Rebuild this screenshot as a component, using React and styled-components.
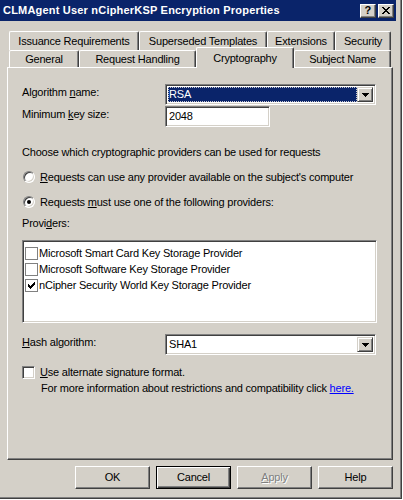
import React from 'react'
import styled, { createGlobalStyle } from 'styled-components'

const face = '#d4d0c8'
const shadow = '#808080'
const dark = '#404040'
const navy = '#0a246a'

const GlobalStyle = createGlobalStyle`
  html, body {
    margin: 0;
    padding: 0;
    background: #ffffff;
  }
  body {
    font-family: "Liberation Sans", Arial, sans-serif;
    font-size: 11px;
    line-height: 13px;
    letter-spacing: -0.2px;
    color: #000;
  }
`

const Window = styled.div`
  width: 402px;
  height: 499px;
  box-sizing: border-box;
  background: ${face};
  border-right: 1px solid ${dark};
  border-bottom: 1px solid ${dark};
  box-shadow: inset -1px -1px ${shadow};
  padding-right: 3px;
  display: flex;
  flex-direction: column;
`

const TitleBar = styled.div`
  height: 21px;
  margin-right: 2px;
  background: ${navy};
  display: flex;
  align-items: center;
  padding: 0 2px 0 3px;
  color: #fff;
  font-weight: bold;
  font-size: 11px;
  letter-spacing: 0.2px;
`

const Title = styled.div`
  flex: 1;
  white-space: nowrap;
`

const CaptionButton = styled.div`
  width: 16px;
  height: 14px;
  box-sizing: border-box;
  background: ${face};
  border-top: 1px solid #fff;
  border-left: 1px solid #fff;
  border-right: 1px solid ${dark};
  border-bottom: 1px solid ${dark};
  box-shadow: inset -1px -1px ${shadow};
  color: #000;
  display: flex;
  align-items: center;
  justify-content: center;
  margin-left: ${p => p.$gap || 0}px;
  font-size: 11px;
  font-weight: bold;
`

const TabArea = styled.div`
  margin: 10px 0 0 9px;
  display: flex;
  flex-direction: column;
`

const TabRow = styled.div`
  display: flex;
  height: ${p => p.$h}px;
`

const Tab = styled.div`
  width: ${p => p.$w}px;
  height: ${p => (p.$active ? 21 : p.$h)}px;
  margin-top: ${p => (p.$active ? -3 : 0)}px;
  box-sizing: border-box;
  background: ${face};
  border-top: 1px solid #fff;
  border-left: 1px solid #fff;
  border-right: 1px solid ${dark};
  border-radius: 2px 2px 0 0;
  box-shadow: inset -1px 0 ${shadow};
  display: flex;
  align-items: ${p => (p.$active ? 'flex-start' : 'center')};
  padding-top: ${p => (p.$active ? 4 : 0)}px;
  justify-content: center;
  white-space: nowrap;
  position: ${p => (p.$active ? 'relative' : 'static')};
  z-index: ${p => (p.$active ? 1 : 0)};
`

const Panel = styled.div`
  margin-left: 7px;
  width: 386px;
  height: 393px;
  box-sizing: border-box;
  border-top: 1px solid #fff;
  border-left: 1px solid #fff;
  border-right: 1px solid ${dark};
  border-bottom: 1px solid ${dark};
  box-shadow: inset -1px -1px ${shadow};
  padding: 16px 0 0 14px;
  display: flex;
  flex-direction: column;
`

const FieldRow = styled.div`
  display: flex;
  align-items: flex-start;
  margin-top: ${p => p.$mt || 0}px;
`

const FieldLabel = styled.div`
  width: 143px;
  padding-top: 2px;
`

const Sunken = styled.div`
  width: ${p => p.$w}px;
  height: ${p => p.$h || 21}px;
  box-sizing: border-box;
  border-top: 1px solid ${shadow};
  border-left: 1px solid ${shadow};
  border-right: 1px solid #fff;
  border-bottom: 1px solid #fff;
  box-shadow: inset 1px 1px ${dark}, inset -1px -1px ${face};
  background: #fff;
  display: flex;
  padding: 2px;
`

const ComboValue = styled.div`
  flex: 1;
  display: flex;
  align-items: center;
  padding-left: 1px;
  background: ${p => (p.$selected ? navy : '#fff')};
  color: ${p => (p.$selected ? '#fff' : '#000')};
  outline: ${p => (p.$selected ? '1px dotted #c8c8d0' : 'none')};
  outline-offset: -1px;
`

const DropButton = styled.div`
  width: 16px;
  box-sizing: border-box;
  background: ${face};
  border-top: 1px solid ${face};
  border-left: 1px solid ${face};
  border-right: 1px solid ${dark};
  border-bottom: 1px solid ${dark};
  box-shadow: inset 1px 1px #fff, inset -1px -1px ${shadow};
  display: flex;
  align-items: center;
  justify-content: center;
`

const TextValue = styled.div`
  flex: 1;
  display: flex;
  align-items: center;
  padding-left: 1px;
`

const Text = styled.div`
  margin-top: ${p => p.$mt || 0}px;
  margin-left: ${p => p.$ml || 0}px;
  white-space: nowrap;
`

const OptionRow = styled.div`
  display: flex;
  align-items: center;
  height: ${p => p.$h || 16}px;
  margin-top: ${p => p.$mt || 0}px;
  white-space: nowrap;
`

const Radio = styled.span`
  width: 12px;
  height: 12px;
  margin: 0 5px 0 1px;
  box-sizing: border-box;
  border-radius: 50%;
  border: 1px solid;
  border-color: ${shadow} #fff #fff ${shadow};
  box-shadow: inset 1px 1px ${dark}, inset -1px -1px ${face};
  background: #fff;
  display: flex;
  align-items: center;
  justify-content: center;
  &::after {
    content: '';
    width: 4px;
    height: 4px;
    border-radius: 50%;
    background: ${p => (p.$checked ? '#000' : 'transparent')};
  }
`

const Check3D = styled.span`
  width: 13px;
  height: 13px;
  margin-right: 5px;
  box-sizing: border-box;
  border-top: 1px solid ${shadow};
  border-left: 1px solid ${shadow};
  border-right: 1px solid #fff;
  border-bottom: 1px solid #fff;
  box-shadow: inset 1px 1px ${dark}, inset -1px -1px ${face};
  background: #fff;
`

const ListBox = styled(Sunken)`
  flex-direction: column;
  padding: 4px 2px 2px 2px;
  margin-top: ${p => p.$mt || 0}px;
`

const ListItem = styled.div`
  height: 16px;
  display: flex;
  align-items: center;
  white-space: nowrap;
`

const FlatCheck = styled.span`
  width: 13px;
  height: 13px;
  margin-right: 1px;
  box-sizing: border-box;
  border: 1px solid ${shadow};
  background: #fff;
  display: flex;
  align-items: center;
  justify-content: center;
`

const Key = styled.span`
  text-decoration: underline;
`

const Link = styled.a`
  color: #0000ff;
  text-decoration: underline;
`

const ButtonRow = styled.div`
  margin: 6px 0 0 7px;
  width: 386px;
  display: flex;
  justify-content: flex-end;
  gap: 6px;
`

const Button = styled.div`
  width: 75px;
  height: 23px;
  box-sizing: border-box;
  background: ${face};
  border-top: 1px solid ${p => (p.$default ? '#000' : '#fff')};
  border-left: 1px solid ${p => (p.$default ? '#000' : '#fff')};
  border-right: 1px solid ${p => (p.$default ? '#000' : dark)};
  border-bottom: 1px solid ${p => (p.$default ? '#000' : dark)};
  box-shadow: ${p =>
    p.$default
      ? `inset 1px 1px #fff, inset -1px -1px ${dark}, inset -2px -2px ${shadow}`
      : `inset -1px -1px ${shadow}`};
  display: flex;
  align-items: center;
  justify-content: center;
  color: ${p => (p.$disabled ? shadow : '#000')};
  text-shadow: ${p => (p.$disabled ? '1px 1px #fff' : 'none')};
`

const Arrow = () => (
  <svg width="7" height="4" viewBox="0 0 7 4" shapeRendering="crispEdges">
    <path d="M0 0h7v1h-1v1h-1v1h-1v1h-1v-1h-1v-1h-1v-1h-1z" fill="#000" />
  </svg>
)

const Tick = () => (
  <svg width="7" height="7" viewBox="0 0 7 7" shapeRendering="crispEdges">
    <path
      d="M6 0h1v3h-1v1h-1v1h-1v1h-1v1h-1v-1h-1v-1h-1v-3h1v1h1v1h1v-1h1v-1h1v-1h1z"
      fill="#000"
    />
  </svg>
)

const CloseGlyph = () => (
  <svg width="8" height="7" viewBox="0 0 8 7" shapeRendering="crispEdges">
    <path
      d="M0 0h2v1h1v1h2v-1h1v-1h2v1h-1v1h-1v1h-1v1h1v1h1v1h1v1h-2v-1h-1v-1h-2v1h-1v1h-2v-1h1v-1h1v-1h1v-1h-1v-1h-1v-1h-1z"
      fill="#000"
    />
  </svg>
)

const backTabs = [
  { label: 'Issuance Requirements', w: 130 },
  { label: 'Superseded Templates', w: 128 },
  { label: 'Extensions', w: 68 },
  { label: 'Security', w: 56 },
]

const frontTabs = [
  { label: 'General', w: 70 },
  { label: 'Request Handling', w: 117 },
  { label: 'Cryptography', w: 98, active: true },
  { label: 'Subject Name', w: 97 },
]

const providers = [
  { name: 'Microsoft Smart Card Key Storage Provider', on: false },
  { name: 'Microsoft Software Key Storage Provider', on: false },
  { name: 'nCipher Security World Key Storage Provider', on: true },
]

export default function App() {
  return (
    <>
      <GlobalStyle />
      <Window>
        <TitleBar>
          <Title>CLMAgent User nCipherKSP Encryption Properties</Title>
          <CaptionButton>?</CaptionButton>
          <CaptionButton $gap={2}>
            <CloseGlyph />
          </CaptionButton>
        </TitleBar>

        <TabArea>
          <TabRow $h={19}>
            {backTabs.map(t => (
              <Tab key={t.label} $w={t.w} $h={19}>
                {t.label}
              </Tab>
            ))}
          </TabRow>
          <TabRow $h={17}>
            {frontTabs.map(t => (
              <Tab key={t.label} $w={t.w} $h={17} $active={t.active}>
                {t.label}
              </Tab>
            ))}
          </TabRow>
        </TabArea>

        <Panel>
          <FieldRow>
            <FieldLabel>
              Algorithm <Key>n</Key>ame:
            </FieldLabel>
            <Sunken $w={211}>
              <ComboValue $selected>RSA</ComboValue>
              <DropButton>
                <Arrow />
              </DropButton>
            </Sunken>
          </FieldRow>
          <FieldRow $mt={1}>
            <FieldLabel>
              Minimum <Key>k</Key>ey size:
            </FieldLabel>
            <Sunken $w={105}>
              <TextValue>2048</TextValue>
            </Sunken>
          </FieldRow>

          <Text $mt={19}>Choose which cryptographic providers can be used for requests</Text>

          <OptionRow $mt={10}>
            <Radio />
            <span>
              <Key>R</Key>equests can use any provider available on the subject's computer
            </span>
          </OptionRow>
          <OptionRow $mt={9}>
            <Radio $checked />
            <span>
              Requests <Key>m</Key>ust use one of the following providers:
            </span>
          </OptionRow>

          <Text $mt={7}>
            Provi<Key>d</Key>ers:
          </Text>

          <ListBox $w={355} $h={83} $mt={10}>
            {providers.map(p => (
              <ListItem key={p.name}>
                <FlatCheck>{p.on && <Tick />}</FlatCheck>
                {p.name}
              </ListItem>
            ))}
          </ListBox>

          <FieldRow $mt={11}>
            <FieldLabel>
              <Key>H</Key>ash algorithm:
            </FieldLabel>
            <Sunken $w={211}>
              <ComboValue>SHA1</ComboValue>
              <DropButton>
                <Arrow />
              </DropButton>
            </Sunken>
          </FieldRow>

          <OptionRow $mt={11} $h={13}>
            <Check3D />
            <span>
              <Key>U</Key>se alternate signature format.
            </span>
          </OptionRow>
          <Text $mt={3} $ml={19}>
            For more information about restrictions and compatibility click <Link>here.</Link>
          </Text>
        </Panel>

        <ButtonRow>
          <Button>OK</Button>
          <Button $default>Cancel</Button>
          <Button $disabled>
            <span>
              <Key>A</Key>pply
            </span>
          </Button>
          <Button>Help</Button>
        </ButtonRow>
      </Window>
    </>
  )
}
